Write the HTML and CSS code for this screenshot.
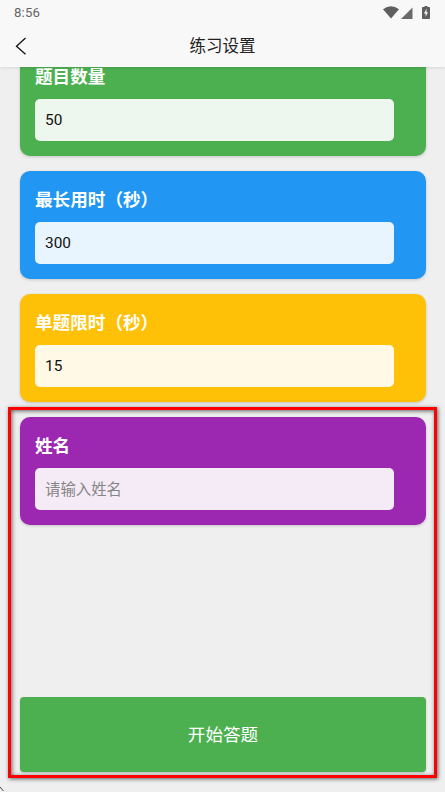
FILE: index.html
```html
<!DOCTYPE html>
<html lang="zh">
<head>
<meta charset="utf-8">
<title>练习设置</title>
<link rel="stylesheet" href="styles.css">
</head>
<body>
<div class="app">
  <header class="top">
    <div class="status">
      <span class="time">8:56</span>
      <span class="sys">
        <svg width="16" height="13" viewBox="0 0 16 13"><path d="M0 3.2Q8-2.6 16 3.2L8 12.6Z" fill="#5f5f5f"/></svg>
        <svg width="12" height="12" viewBox="0 0 12 12"><path d="M0 12 11.5 0.5V12Z" fill="#6a6a6a"/></svg>
        <svg class="batt" width="8" height="13" viewBox="0 0 8 13"><path fill-rule="evenodd" d="M2.5 0H5.5V1H7.2Q8 1 8 1.8V12.2Q8 13 7.2 13H.8Q0 13 0 12.2V1.8Q0 1 .8 1H2.5ZM4.6 2.6 2 7.4H3.6V10.8L6 6.2H4.4Z" fill="#5f5f5f"/></svg>
      </span>
    </div>
    <nav class="nav">
      <svg class="back" width="12" height="18" viewBox="0 0 12 18"><path d="M10.5 1 1.5 9.2 10.5 17.2" fill="none" stroke="#111" stroke-width="1.3"/></svg>
      <h1 class="title">练习设置</h1>
    </nav>
  </header>
  <main class="list">
    <section class="card green">
      <label class="label">题目数量</label>
      <div class="field tint-green">50</div>
    </section>
    <section class="card blue">
      <label class="label">最长用时（秒）</label>
      <div class="field tint-blue">300</div>
    </section>
    <section class="card amber">
      <label class="label">单题限时（秒）</label>
      <div class="field tint-amber">15</div>
    </section>
    <section class="card purple">
      <label class="label">姓名</label>
      <div class="field tint-purple placeholder">请输入姓名</div>
    </section>
  </main>
  <button class="start"><span class="start-text">开始答题</span></button>
  <div class="highlight"></div>
  <svg class="pointer" width="4" height="5" viewBox="0 0 4 5"><path d="M0 0 3.5 4" fill="none" stroke="#444" stroke-width="1"/></svg>
</div>
</body>
</html>
```
FILE: styles.css
```css
* { box-sizing: border-box; }
html, body { margin: 0; padding: 0; }
body {
  width: 445px;
  height: 792px;
  overflow: hidden;
  font-family: Roboto, "Noto Sans CJK SC", sans-serif;
  background: #efefef;
}
.app {
  position: relative;
  width: 445px;
  height: 792px;
  display: flex;
  flex-direction: column;
}
.top {
  position: relative;
  z-index: 1;
  flex: none;
  background: #f8f8f8;
  box-shadow: 0 1px 3px rgba(0,0,0,.1);
}
.status {
  height: 25px;
  padding: 0 15px 0 14px;
  display: flex;
  align-items: center;
  justify-content: space-between;
}
.time { font-size: 13.2px; color: #666; letter-spacing: .2px; }
.sys { display: flex; align-items: center; gap: 2px; }
.batt { margin-left: 7px; }
.nav {
  position: relative;
  height: 42px;
  display: flex;
  align-items: center;
  justify-content: center;
}
.back { position: absolute; left: 15px; top: 12px; }
.title {
  margin: 0 0 2px;
  font-size: 16.5px;
  font-weight: 400;
  color: #222;
}
.list {
  flex: 1;
  min-height: 0;
  overflow: hidden;
  padding: 0 19px 0 20px;
  display: flex;
  flex-direction: column;
  gap: 15px;
}
.card {
  flex: none;
  height: 108px;
  padding: 15px 32px 15px 15px;
  border-radius: 10px;
  display: flex;
  flex-direction: column;
  justify-content: flex-end;
  box-shadow: 0 1px 3px rgba(0,0,0,.18);
}
.card:first-child { margin-top: -19px; }
.green { background: #4caf50; }
.blue { background: #2196f3; }
.amber { background: #ffc107; }
.purple { background: #9c27b0; }
.label {
  font-size: 17.6px;
  line-height: 24px;
  font-weight: 700;
  color: #fff;
  margin-bottom: 10px;
}
.field {
  height: 42px;
  padding: 0 10px;
  border-radius: 5px;
  display: flex;
  align-items: center;
  font-size: 15.4px;
  color: #111;
}
.tint-green { background: #edf7ee; }
.tint-blue { background: #e9f5fe; }
.tint-amber { background: #fff9e6; }
.tint-purple { background: #f5ebf7; }
.placeholder { color: #858585; padding-bottom: 2px; }
.start {
  flex: none;
  width: 406px;
  height: 75px;
  margin: 0 19px 20px 20px;
  padding: 0 0 3px;
  border: 0;
  border-radius: 4px;
  background: #4caf50;
  color: #fff;
  font-family: inherit;
  font-size: 17.6px;
  box-shadow: 0 1px 2px rgba(0,0,0,.2);
}
.highlight {
  position: absolute;
  left: 8px;
  top: 407px;
  width: 429px;
  height: 371px;
  border: 3px solid #f00;
  box-shadow: 1px 1px 4px rgba(0,0,0,.6), inset 1px 1px 4px rgba(0,0,0,.6);
  pointer-events: none;
}
.pointer { position: absolute; left: 0; top: 787px; }
```
